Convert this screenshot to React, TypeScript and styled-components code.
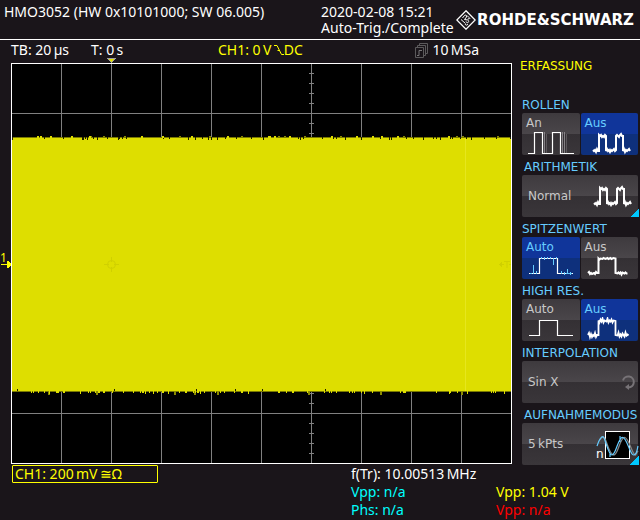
import React from "react";
import styled, { createGlobalStyle, css } from "styled-components";

const GlobalStyle = createGlobalStyle`
  *, *::before, *::after { box-sizing: border-box; }
  body {
    margin: 0;
    background: #1a151a;
    color: #ffffff;
    font-family: "Noto Sans", "Open Sans", sans-serif;
    font-size: 14px;
    line-height: 16px;
  }
  h1, h2, p { margin: 0; font-size: inherit; font-weight: inherit; }
`;

const YELLOW = "#ffff00";
const SKY = "#66ccff";
const CYAN = "#00ffff";
const TRACE = "#dede00";
const GRID = "#808080";

const Screen = styled.div`
  display: flex;
  flex-direction: column;
  min-height: 100vh;
  white-space: nowrap;
`;

const Header = styled.header`
  display: flex;
  align-items: flex-start;
  height: 40px;
  padding: 4px 6px 0 4px;
  border-bottom: 1px solid #ffffff;
`;

const Device = styled.h1`
  flex: 1;
`;

const Status = styled.div`
  width: 135px;
`;

const Brand = styled.div`
  display: flex;
  align-items: center;
  gap: 1px;
  height: 32px;
  font-family: "DejaVu Sans", sans-serif;
  font-size: 15px;
  font-weight: 700;
`;

const Body = styled.main`
  display: grid;
  grid-template-columns: minmax(0, 1fr) 116px;
  column-gap: 10px;
  padding: 0 2px 0 11px;
`;

const InfoBar = styled.div`
  display: grid;
  grid-template-columns: 80px 127px 1fr auto;
  height: 23px;
  padding-right: 33px;
  line-height: 20px;
`;

const Reading = styled.p<{ $color?: string }>`
  display: flex;
  align-items: center;
  height: 20px;
  color: ${(p) => p.$color ?? "#ffffff"};
`;

const Chart = styled.svg`
  display: block;
  width: 100%;
  height: auto;
  overflow: visible;
`;

const Menu = styled.aside`
  display: flex;
  flex-direction: column;
  font-family: "DejaVu Sans", sans-serif;
  font-size: 12px;
`;

const MenuTitle = styled.h2`
  height: 53px;
  margin-left: -2px;
  padding-top: 18px;
  color: ${YELLOW};
`;

const Group = styled.section`
  display: grid;
  grid-template-columns: minmax(0, 1fr);
  grid-template-rows: 20px 42px;
`;

const GroupTitle = styled.h2<{ $indent?: boolean }>`
  padding: 4px 0 0 ${(p) => (p.$indent ? 2 : 0)}px;
  color: ${SKY};
`;

const Keys = styled.div`
  display: grid;
  grid-auto-flow: column;
  grid-auto-columns: minmax(0, 1fr);
  gap: 1px;
`;

const keyFace = css<{ $active?: boolean }>`
  position: relative;
  margin: 0;
  border: 0;
  border-radius: 2px;
  font: inherit;
  text-align: left;
  color: ${(p) => (p.$active ? SKY : "#c8c8c8")};
  background: ${(p) =>
    p.$active
      ? "linear-gradient(#10359a 50%, #0e307c 50%)"
      : "linear-gradient(#3e3a3e, #4a464a 50%, #343034 50%, #3a363a)"};
`;

const ToggleKey = styled.button<{ $active?: boolean }>`
  ${keyFace}
  display: flex;
  flex-direction: column;
  padding: 2px 0 0 4px;
`;

const WideKey = styled.button<{ $corner?: boolean }>`
  ${keyFace}
  display: flex;
  align-items: center;
  justify-content: space-between;
  padding: 0 0 0 6px;

  ${(p) =>
    p.$corner &&
    css`
      &::after {
        content: "";
        position: absolute;
        right: -1px;
        bottom: 0;
        width: 9px;
        height: 9px;
        background: linear-gradient(135deg, transparent 50%, #00c8ff 50%);
      }
    `}
`;

const KeyIcon = styled.svg`
  display: block;
  flex: none;
  margin-left: 2px;
`;

const WideIcon = styled.svg<{ $gap: number }>`
  display: block;
  flex: none;
  margin-right: ${(p) => p.$gap}px;
  overflow: visible;
`;

const Footer = styled.footer`
  display: grid;
  grid-template-columns: 1fr 145px 144px;
  grid-auto-rows: 18px;
  padding-left: 12px;
  line-height: 18px;
`;

const Channel = styled.div`
  width: 146px;
  padding-left: 2px;
  border: 1px solid ${YELLOW};
  border-radius: 1px;
  color: ${YELLOW};
  line-height: 16px;
`;

const Measure = styled.p<{ $color?: string; $col: string }>`
  grid-column: ${(p) => p.$col};
  color: ${(p) => p.$color ?? "#ffffff"};
`;

function createNoise(seed: number) {
  let s = seed;
  return () => {
    s = (s * 16807) % 2147483647;
    return s / 2147483647;
  };
}

function traceEdges() {
  const rnd = createNoise(4711);
  let peaks = "";
  let notches = "";
  let dim = "";
  for (let x = 1; x < 500; x++) {
    const a = rnd();
    if (a < 0.12) notches += `M${x} 74h1v${a < 0.05 ? 3 : 2}h-1z`;
    else if (a > 0.95) peaks += `M${x} 73h2v2h-2z`;
    else if (a > 0.93) dim += `M${x} 73h2v1h-2z`;
    const b = rnd();
    if (b < 0.13) peaks += `M${x} 328h1v${b < 0.03 ? 3 : 2}h-1z`;
    else if (b > 0.98) dim += `M${x} 328h2v4h-2z`;
    else if (b > 0.965) notches += `M${x} 326h1v2h-1z`;
  }
  return { peaks, notches, dim };
}

const edges = traceEdges();
const columns = [50, 100, 150, 200, 250, 300, 350, 400, 450];
const rows = [50, 100, 150, 200, 250, 300, 350];
const ticks = Array.from({ length: 39 }, (_, i) => (i + 1) * 10).filter((y) => y % 50 !== 0);

function ScopeChart() {
  return (
    <Chart viewBox="0 0 501 401" role="img" aria-label="CH1" shapeRendering="crispEdges">
      <rect width="501" height="401" fill="#000000" />
      <path
        d={columns.map((x) => `M${x} 0h1v401h-1z`).join("") + rows.map((y) => `M0 ${y}h501v1h-501z`).join("")}
        fill={GRID}
      />
      <path d={ticks.map((y) => `M298 ${y}h5v1h-5z`).join("")} fill={GRID} />
      <rect x="1" y="75" width="499" height="253" fill={TRACE} />
      <path d="M1 74h499v1h-499zM1 328h499v1h-499z" fill="#7a7a00" />
      <path d={edges.notches} fill="#1c1c00" />
      <path d={edges.dim} fill="#8a8a00" />
      <path d={edges.peaks} fill={TRACE} />
      <rect x="454" y="76" width="1" height="252" fill="#e6e61e" />
      <g stroke="#d0d000" fill="none" shapeRendering="auto">
        <circle cx="100.5" cy="201.5" r="4" />
        <path d="M93 201.5h5M103 201.5h5M100.5 194v5M100.5 204v5" />
        <path d="M488 201.5h5M493 198.500h6M496 199v6M498 201.500h2" />
      </g>
      <path d="M488 201.500l3-3v6z" fill="#d0d000" />
      <path d="M0 0h501v401h-501zM1 1v399h499v-399z" fill="#ffffff" fillRule="evenodd" />
      <path d="M96 -5h9l-4.500 5z" fill="#a0a0a0" />
      <path d="M98 -4h5l-2.500 3z" fill="#e0e000" />
      <text x="-11" y="199" fontSize="12" fill={YELLOW}>
        1
      </text>
      <path d="M-10 201h9v1h-9zM-4 198h1l3 3v1l-3 3h-1z" fill={YELLOW} />
    </Chart>
  );
}

function BrandMark() {
  return (
    <svg width="20" height="20" viewBox="0 0 20 20" fill="none" stroke="#ffffff" aria-hidden="true">
      <path d="M10 .8L19.200 10L10 19.200L.8 10Z" strokeWidth="1.300" />
      <path d="M5 9.500l4.500 4M6.500 8l2-2.500c1-1 2.800 0 2 1.500L8.500 9.500M8.500 9.500l3 .5" />
      <path d="M14.500 9c-1-1.500-3-.8-2.500.7s1 1.800.3 2.600-2 .3-2.300-.8M9 14c.5 1.500 2.500 1.500 2.800 0M11 5.500l2 2" />
    </svg>
  );
}

function MemoryIcon() {
  return (
    <svg width="14" height="15" viewBox="0 0 14 15" fill="none" stroke="#5c5a5c" aria-hidden="true">
      <path d="M.5 4.500h8v10h-8zM2.500 4.500v-2h8v10h-2M4.500 2.500v-2h8v10h-2" />
      <path d="M2 12.500h2v-5h3" stroke="#777577" />
    </svg>
  );
}

type Shape = "clean2" | "noisy2" | "peak" | "noisy" | "clean" | "noisyHigh";

const noisyDouble =
  "M0 18l1 1 1-1 1 2 1-3 1 2h1V3l1 1 1-1 1 2 1-1 1 1 1-2 1 1V19l1-2 1 2 1-1 1 2 1-2 1 1 2-2 1 2 1 -1V4l1-1 1 1 1 1 1-2 1-1 1 2 1 0V19l1-2 1 3 1-2 1 1 2-2 1 2";

function PulseShape({ shape }: { shape: Shape }) {
  switch (shape) {
    case "clean2":
      return (
        <>
          <path d="M16.500 1v22M34.500 1v22M36.500 1v22" stroke="#858185" />
          <path d="M18.500 3v20M38.500 3v20" stroke="#5c585c" />
          <path d="M0 22.500H6.500V1.500H14.500V22.500H24.500V1.500H32.500V22.500H46" stroke="#ffffff" strokeWidth="1.200" />
        </>
      );
    case "noisy2":
      return <path d={noisyDouble} transform="translate(6 1)" stroke="#ffffff" strokeWidth="2" />;
    case "peak":
      return (
        <>
          <path d="M1 18.500H11.500V3.500H29.500V18.500H45" stroke="#ffffff" strokeWidth="1.200" />
          <path
            d="M2 18.500H4M38 18.500H44M5.500 10v9M8.500 16v3M13.500 2v2M16.500 2v3M19.500 2v2M22.500 2v2M25.500 3v7M28.500 2v2M33.500 16v3M36.500 17v3M39.500 14v5M42.500 17v3"
            stroke={SKY}
          />
        </>
      );
    case "noisy":
      return (
        <path
          d="M1 18l1-1 1 2 1-1 1 1 2-1 1 1 1-2 1 1h1.500V3.500l1 1 1-1 2 .5 1-1 2 1 2-1 1 1 2-1 1 1 2-1 2 .5V18l2 .5 1-1 1 1 1-1 1 2 1-2 2 1 1-1 1 1 1 0"
          stroke="#ffffff"
          strokeWidth="2"
        />
      );
    case "clean":
      return <path d="M1 18.500H11.500V3.500H29.500V18.500H45" stroke="#ffffff" strokeWidth="1.200" />;
    case "noisyHigh":
      return (
        <path
          d="M1 18l1-2 1 4 1-3 1 3 1-2 1 1 1-3 1 4 1-2h1.500V3.500l1 2 1-3 1 2 1-3 1 4 1-2 2 1 1-3 1 4 1-2 1 1 1-2 1 3 1-2 2 .5V18l2 .5 1-3 1 4 1-2 1 2 1-3 2 3 1-4 1 3 1-1 1 1"
          stroke="#ffffff"
          strokeWidth="1.800"
        />
      );
  }
}

function Toggle({ label, shape, active }: { label: string; shape: Shape; active?: boolean }) {
  return (
    <ToggleKey type="button" $active={active} aria-pressed={!!active}>
      {label}
      <KeyIcon width="46" height="24" viewBox="0 0 46 24" fill="none" aria-hidden="true">
        <PulseShape shape={shape} />
      </KeyIcon>
    </ToggleKey>
  );
}

function MenuGroup({ title, indent, children }: { title: string; indent?: boolean; children: React.ReactNode }) {
  return (
    <Group aria-label={title}>
      <GroupTitle $indent={indent}>{title}</GroupTitle>
      <Keys>{children}</Keys>
    </Group>
  );
}

export default function App() {
  return (
    <Screen>
      <GlobalStyle />
      <Header>
        <Device>HMO3052 (HW 0x10101000; SW 06.005)</Device>
        <Status>
          <p>2020-02-08 15:21</p>
          <p>Auto-Trig./Complete</p>
        </Status>
        <Brand>
          <BrandMark />
          ROHDE&amp;SCHWARZ
        </Brand>
      </Header>
      <Body>
        <div>
          <InfoBar>
            <Reading>TB: 20{"\u2009"}µs</Reading>
            <Reading>T: 0{"\u2009"}s</Reading>
            <Reading $color={YELLOW}>
              CH1: 0{"\u2009"}V{"\u2009"}
              <svg width="10" height="12" viewBox="0 0 10 12" fill="none" stroke={YELLOW} aria-label="falling edge">
                <path d="M0 1.500h3L7.500 10.500h2.500M3.500 6.500h2.500" />
              </svg>
              DC
            </Reading>
            <Reading>
              <MemoryIcon />
              &nbsp;10{"\u2009"}MSa
            </Reading>
          </InfoBar>
          <ScopeChart />
        </div>
        <Menu>
          <MenuTitle>ERFASSUNG</MenuTitle>
          <MenuGroup title="ROLLEN">
            <Toggle label="An" shape="clean2" />
            <Toggle label="Aus" shape="noisy2" active />
          </MenuGroup>
          <MenuGroup title="ARITHMETIK" indent>
            <WideKey type="button" $corner>
              Normal
              <WideIcon $gap={4} width="46" height="24" viewBox="0 0 46 24" fill="none" aria-hidden="true">
                <PulseShape shape="noisy2" />
              </WideIcon>
            </WideKey>
          </MenuGroup>
          <MenuGroup title="SPITZENWERT">
            <Toggle label="Auto" shape="peak" active />
            <Toggle label="Aus" shape="noisy" />
          </MenuGroup>
          <MenuGroup title="HIGH RES.">
            <Toggle label="Auto" shape="clean" />
            <Toggle label="Aus" shape="noisyHigh" active />
          </MenuGroup>
          <MenuGroup title="INTERPOLATION">
            <WideKey type="button">
              Sin X
              <WideIcon $gap={2} width="15" height="15" viewBox="0 0 15 15" fill="none" aria-hidden="true">
                <path d="M2 5.500A5.500 5.500 0 1 1 7.500 12.500" stroke="#777377" strokeWidth="2" />
                <path d="M4 12l4-3v6z" fill="#777377" />
              </WideIcon>
            </WideKey>
          </MenuGroup>
          <MenuGroup title="AUFNAHMEMODUS" indent>
            <WideKey type="button" $corner>
              5{"\u2009"}kPts
              <WideIcon $gap={0} width="42" height="32" viewBox="0 0 42 32" fill="none" aria-hidden="true">
                <rect x="9.500" y="3.500" width="24" height="27" fill="#000000" stroke="#ffffff" />
                <path
                  d="M4 12C6 8 8 8 10 13S14 27 18 27S24 9.300 28.500 9.300S36 27 39.500 27L42 23"
                  stroke="#858585"
                  strokeWidth="1.300"
                />
                <path
                  d="M1 18C3 12 5 8.700 7 8.700S12 27 16 27S22 9.300 26.500 9.300S34 27 37.500 27S41 22 42 18M14 25v4M24 8v6"
                  stroke={SKY}
                  strokeWidth="1.200"
                />
                <text x="0" y="30" fontSize="12" fill="#ffffff">
                  n
                </text>
              </WideIcon>
            </WideKey>
          </MenuGroup>
        </Menu>
      </Body>
      <Footer>
        <Channel>CH1: 200{"\u2009"}mV{"\u2009"}≅Ω</Channel>
        <Measure $col="2 / 4">f(Tr): 10.00513{"\u2009"}MHz</Measure>
        <Measure $col="2" $color={CYAN}>Vpp: n/a</Measure>
        <Measure $col="3" $color={YELLOW}>Vpp: 1.04 V</Measure>
        <Measure $col="2" $color={CYAN}>Phs: n/a</Measure>
        <Measure $col="3" $color="#ff0000">Vpp: n/a</Measure>
      </Footer>
    </Screen>
  );
}
